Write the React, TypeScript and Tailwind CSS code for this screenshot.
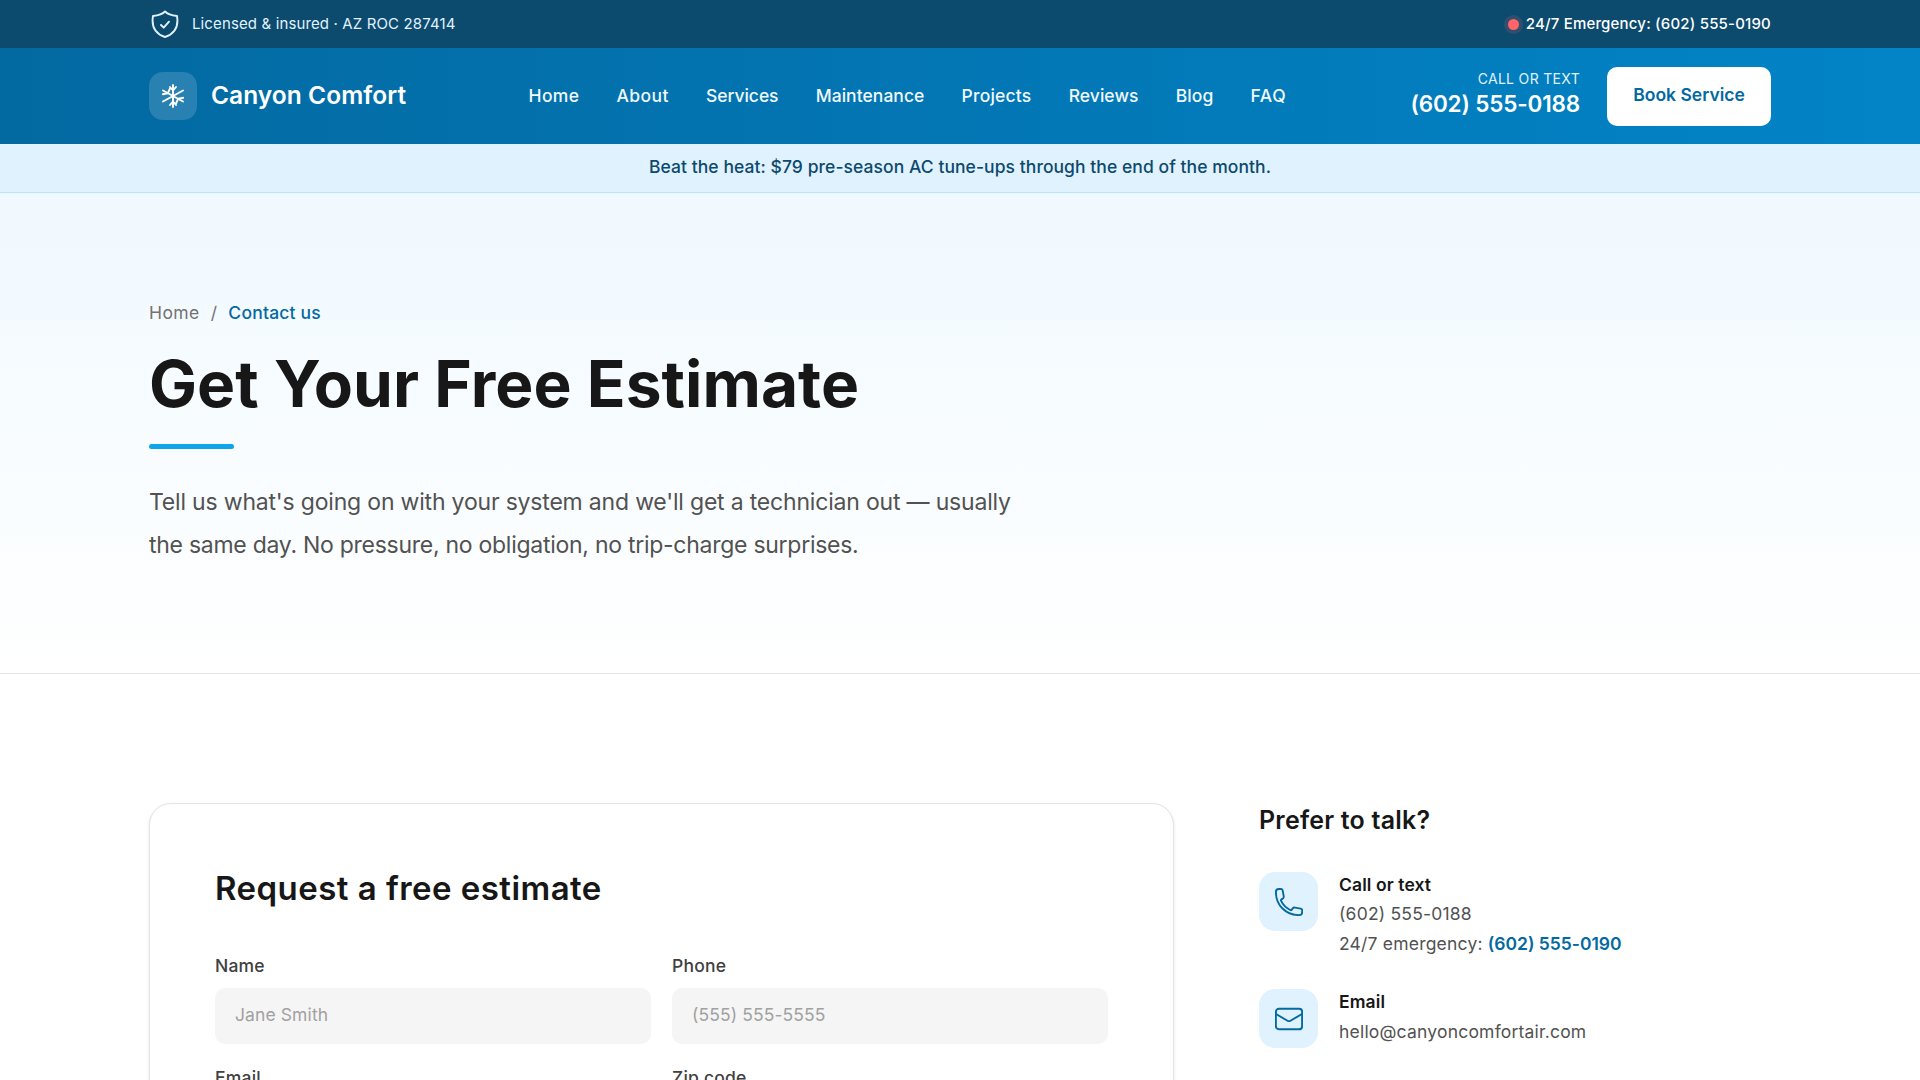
import type { ReactNode } from "react";

const navLinks = [
  { label: "Home", className: "tracking-[0.35px]" },
  { label: "About", className: "tracking-[0.4px]" },
  { label: "Services", className: "tracking-[-0.05px]" },
  { label: "Maintenance", className: "tracking-[0.04px]" },
  { label: "Projects", className: "tracking-[0.2px]" },
  { label: "Reviews", className: "tracking-[0.05px]" },
  { label: "Blog", className: "tracking-[0.1px]" },
  { label: "FAQ", className: "tracking-[0.6px]" },
];

function ShieldIcon() {
  return (
    <svg
      className="h-7 w-7"
      viewBox="0 0 28 28"
      fill="none"
      stroke="currentColor"
      strokeWidth="1.9"
      strokeLinecap="round"
      strokeLinejoin="round"
    >
      <path d="M14 1.400c-2.200 2.600-7 4.200-12 4.600-1.400 8.400-.2 17 12 21 12.200-4 13.400-12.600 12-21C21 5.600 16.200 4 14 1.400Z" />
      <path d="m10 15 2.700 2.700 5.300-6" />
    </svg>
  );
}

function SnowflakeIcon() {
  return (
    <svg
      className="h-6 w-6"
      viewBox="0 0 24 24"
      fill="none"
      stroke="currentColor"
      strokeWidth="1.9"
      strokeLinecap="round"
      strokeLinejoin="round"
    >
      <path d="M12 1v22M2 17.500l20-11M2 6.500l20 11" />
      <path d="m9 3 3 3.500L15 3M9 21l3-3.500 3 3.500" />
      <path d="m1.800 10.200 5-.9 2.200-4.800M22.200 13.800l-5 .9-2.200 4.800" />
    </svg>
  );
}

function PhoneIcon() {
  return (
    <svg
      className="h-7 w-7"
      viewBox="0 0 28 28"
      fill="none"
      stroke="currentColor"
      strokeWidth="1.9"
      strokeLinecap="round"
      strokeLinejoin="round"
    >
      <path d="M3.800 1 5.600.9c1.200 0 1.900.6 2.100 1.700l1 5.600c.2 1.100-.1 1.800-1 2.400l-1.300.8c-.5.4-.6.9-.3 1.500 2.100 4.300 4.900 7 9.200 9.100.6.300 1.100.2 1.500-.3l.8-1.200c.6-.9 1.400-1.100 2.400-.9l5.600 1c1.100.2 1.600.9 1.600 2v1.700c-.1 1.900-1.200 2.800-3 2.800C10.800 27.100.9 17.200.9 3.900.9 2.100 2 1.100 3.800 1Z" />
    </svg>
  );
}

function MailIcon() {
  return (
    <svg
      className="h-7 w-7"
      viewBox="0 0 28 28"
      fill="none"
      stroke="currentColor"
      strokeWidth="1.9"
      strokeLinecap="round"
      strokeLinejoin="round"
    >
      <rect x=".9" y="3.700" width="26.200" height="20.600" rx="3" />
      <path d="m1 9 11.500 6.700c1 .6 2 .6 3 0L27 9" />
    </svg>
  );
}

function Field({ label, placeholder }: { label: string; placeholder: string }) {
  return (
    <label className="block">
      <span className="block h-[26px] text-[17.5px] leading-[26px] font-medium tracking-[0.2px] text-[#404040]">
        {label}
      </span>
      <input
        className="mt-[9px] block h-14 w-full rounded-[10px] bg-[#f5f5f5] px-5 pb-[3px] text-[17.5px] tracking-[0.1px] text-[#171717] placeholder:text-[#a1a1a1]"
        placeholder={placeholder}
      />
    </label>
  );
}

function ContactItem({
  icon,
  title,
  children,
}: {
  icon: ReactNode;
  title: string;
  children: ReactNode;
}) {
  return (
    <li className="flex gap-[21px]">
      <div className="flex size-[59px] shrink-0 items-center justify-center rounded-2xl bg-[#e0f2fe] text-[#0369a1]">
        {icon}
      </div>
      <div className="-mt-[2px] text-[17.5px] leading-[29.400px] tracking-[0.2px] text-[#525252]">
        <p className="font-semibold tracking-[0.1px] text-[#171717]">{title}</p>
        {children}
      </div>
    </li>
  );
}

export default function App() {
  return (
    <div className="h-screen overflow-hidden bg-white font-['Inter','Liberation_Sans',sans-serif] text-[#171717]">
      <div className="h-12 bg-[#0c4a6e] text-[15px] text-[#e0f2fe]">
        <div className="mx-auto flex h-full w-[1622px] items-center justify-between">
          <div className="flex items-center gap-[13px] pl-[2px] tracking-[0.13px]">
            <ShieldIcon />
            <span>Licensed &amp; insured · AZ ROC 287414</span>
          </div>
          <div className="flex items-center gap-[7px] font-medium tracking-[0.19px] text-white">
            <span className="size-[11px] rounded-full bg-[#ff6467] ring-4 ring-[#ff6467]/15" />
            <span>24/7 Emergency: (602) 555-0190</span>
          </div>
        </div>
      </div>

      <header className="h-24 bg-linear-to-r from-[#0369a1] to-[#0284c7] text-white">
        <div className="mx-auto flex h-full w-[1622px] items-center">
          <div className="flex w-[379.5px] items-center gap-[14px]">
            <div className="flex size-12 items-center justify-center rounded-[14px] bg-white/15">
              <SnowflakeIcon />
            </div>
            <span className="-mt-px text-[24.5px] font-semibold tracking-[0.05px]">
              Canyon Comfort
            </span>
          </div>
          <nav className="flex gap-[37.2px] pt-px text-[17.5px] font-medium text-[#f0f9ff]">
            {navLinks.map((link) => (
              <a key={link.label} className={link.className}>
                {link.label}
              </a>
            ))}
          </nav>
          <div className="ml-auto flex items-center gap-[27px]">
            <div className="pb-1 text-right">
              <p className="text-sm leading-[20px] tracking-[0.32px] text-[#e0f2fe]">
                CALL OR TEXT
              </p>
              <p className="text-[22.5px] leading-[30px] font-semibold tracking-[-0.16px]">
                (602) 555-0188
              </p>
            </div>
            <button className="h-[59px] w-[164px] rounded-[10px] bg-white pb-px text-[17.5px] font-semibold text-[#0369a1]">
              Book Service
            </button>
          </div>
        </div>
      </header>

      <div className="h-[49px] border-b border-[#b8e6fe] bg-[#e0f2fe] text-center text-[17.5px] leading-[46px] font-medium tracking-[0.06px] text-[#0c4a6e]">
        Beat the heat: $79 pre-season AC tune-ups through the end of the month.
      </div>

      <section className="h-[481px] border-b border-[#e5e5e5] bg-linear-to-b from-[#f0f9ff] to-white pt-[107px]">
        <div className="mx-auto w-[1622px]">
          <div className="flex gap-[11px] text-[17.5px] leading-[25px] tracking-[0.4px] text-[#737373]">
            <span>Home</span>
            <span>/</span>
            <span className="font-medium tracking-[0.2px] text-[#0369a1]">Contact us</span>
          </div>
          <h1 className="mt-[27px] text-[64px] leading-[64px] font-bold tracking-[0.05px]">
            Get Your Free Estimate
          </h1>
          <div className="mt-[28px] h-[5px] w-[85px] rounded-full bg-[#0ea5e9]" />
          <p className="mt-[32px] flex flex-col text-[23px] leading-[42.5px] text-[#525252]">
            <span className="tracking-[-0.19px]">
              Tell us what's going on with your system and we'll get a technician out — usually
            </span>
            <span className="tracking-[-0.27px]">
              the same day. No pressure, no obligation, no trip-charge surprises.
            </span>
          </p>
        </div>
      </section>

      <main className="mx-auto flex w-[1622px] gap-[85px] pt-[129px]">
        <div className="h-[700px] w-[1025px] rounded-[22px] border border-[#e5e5e5] bg-white px-[65px] pt-16 shadow-sm">
          <h2 className="text-[33px] leading-10 font-semibold tracking-[0.46px]">
            Request a free estimate
          </h2>
          <div className="mt-[45px] grid grid-cols-2 gap-x-[21px] gap-y-[21px]">
            <Field label="Name" placeholder="Jane Smith" />
            <Field label="Phone" placeholder="(555) 555-5555" />
            <Field label="Email" placeholder="jane@example.com" />
            <Field label="Zip code" placeholder="85001" />
          </div>
        </div>

        <aside>
          <h3 className="text-[25px] leading-[35px] font-semibold tracking-[0.2px]">
            Prefer to talk?
          </h3>
          <ul className="mt-[34px] flex flex-col gap-[31px]">
            <ContactItem icon={<PhoneIcon />} title="Call or text">
              <p>(602) 555-0188</p>
              <p>
                24/7 emergency:{" "}
                <span className="font-semibold tracking-[-0.02px] text-[#0369a1]">
                  (602) 555-0190
                </span>
              </p>
            </ContactItem>
            <ContactItem icon={<MailIcon />} title="Email">
              <p>hello@canyoncomfortair.com</p>
            </ContactItem>
          </ul>
        </aside>
      </main>
    </div>
  );
}
